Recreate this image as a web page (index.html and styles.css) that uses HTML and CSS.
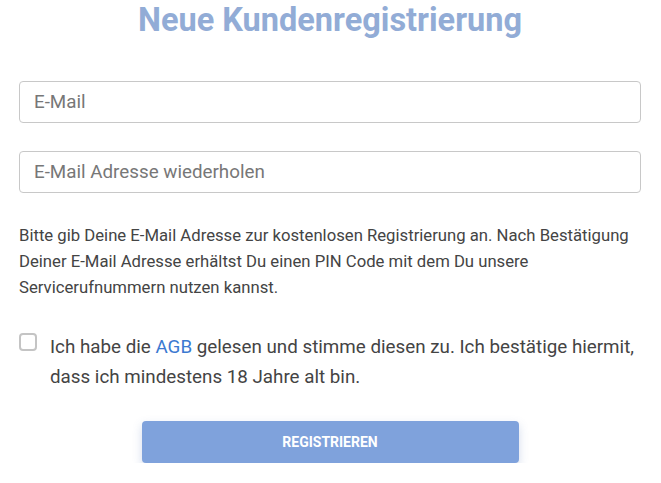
FILE: index.html
```html
<!DOCTYPE html>
<html lang="de">
<head>
    <meta charset="UTF-8">
    <meta name="viewport" content="width=device-width, initial-scale=1.0">
    <title>Neue Kundenregistrierung</title>
    <link rel="stylesheet" href="styles.css">
</head>
<body>
    <div class="container">
        <h1>Neue Kundenregistrierung</h1>
        <form class="register-form">
            <input type="email" class="field" placeholder="E-Mail">
            <input type="email" class="field" placeholder="E-Mail Adresse wiederholen">
            <p class="hint">Bitte gib Deine E-Mail Adresse zur kostenlosen Registrierung an. Nach Bestätigung Deiner E-Mail Adresse erhältst Du einen PIN Code mit dem Du unsere Servicerufnummern nutzen kannst.</p>
            <label class="terms">
                <input type="checkbox" class="terms-box">
                <span class="terms-label">Ich habe die <a href="#">AGB</a> gelesen und stimme diesen zu. Ich bestätige hiermit, dass ich mindestens 18 Jahre alt bin.</span>
            </label>
            <div class="actions">
                <button type="button" class="submit-btn">Registrieren</button>
            </div>
        </form>
    </div>
</body>
</html>
```

FILE: styles.css
```css
body {
    font-family: Roboto, 'Noto Sans', sans-serif;
    margin: 0;
    background: #fff;
    color: #444;
}

.container {
    padding: 0 20px 0 19px;
}

h1 {
    margin: 0;
    padding-top: 2px;
    text-align: center;
    font-size: 32.5px;
    line-height: 36px;
    font-weight: 700;
    color: #92acd6;
}

.register-form {
    display: flex;
    flex-direction: column;
    padding-top: 43px;
}

.field {
    height: 42px;
    box-sizing: border-box;
    padding: 0 14px;
    border: 1px solid #c8c8c8;
    border-radius: 4px;
    font-family: inherit;
    font-size: 18.8px;
    color: #333;
    outline: none;
    margin-bottom: 28px;
}

.field::placeholder {
    color: #777;
}

.hint {
    margin: 2px 0 0;
    font-size: 16.7px;
    line-height: 26px;
    color: #444;
}

.terms {
    display: flex;
    align-items: flex-start;
    gap: 13px;
    margin-top: 31px;
    cursor: pointer;
}

.terms-box {
    appearance: none;
    flex: none;
    width: 18px;
    height: 18px;
    margin: 1px 0 0;
    border: 2px solid #c4c4c4;
    border-radius: 4px;
    background: #fff;
    cursor: pointer;
}

.terms-label {
    font-size: 18.8px;
    line-height: 30px;
    color: #444;
}

.terms-label a {
    color: #3b79d1;
    text-decoration: none;
}

.actions {
    display: flex;
    justify-content: center;
    margin-top: 29px;
}

.submit-btn {
    width: 377px;
    height: 42px;
    background: #7fa2dc;
    color: #fff;
    border: none;
    border-radius: 4px;
    font-family: inherit;
    font-size: 14px;
    font-weight: 700;
    text-transform: uppercase;
    box-shadow: 0 4px 10px rgba(80, 110, 180, 0.25);
    cursor: pointer;
}
```
